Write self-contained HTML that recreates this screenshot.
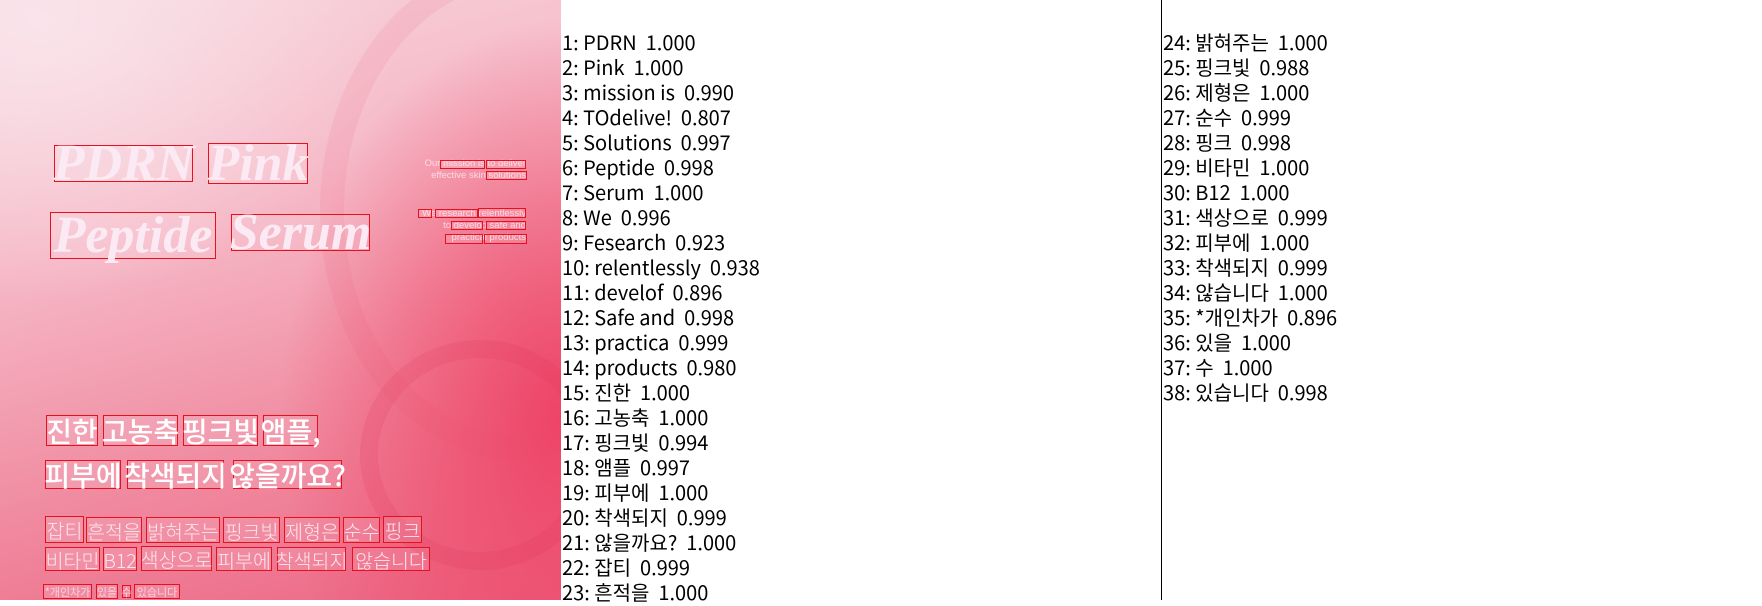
<!DOCTYPE html>
<html><head><meta charset="utf-8"><style>
*{margin:0;padding:0;box-sizing:border-box}
body{width:1762px;height:600px;overflow:hidden;background:#fff;position:relative;font-family:"Liberation Sans","Noto Sans CJK KR",sans-serif}
#img{position:absolute;left:0;top:0;width:561px;height:600px;overflow:hidden;
background:radial-gradient(ellipse 360px 280px at 40px 20px,rgba(250,228,235,.95),rgba(250,228,235,0) 100%),
radial-gradient(ellipse 280px 400px at 560px 420px,#ee4466,rgba(238,68,102,0) 100%),
linear-gradient(165deg,#f7d6de 0%,#f5b3c2 40%,#f08aa0 70%,#ec6482 100%)}
.sw{position:absolute;border-radius:50%;}
.b{position:absolute;border:1.5px solid #e8101c;background:rgba(255,255,255,.12);display:flex;align-items:center;justify-content:center;white-space:nowrap;overflow:visible}
.ti{font-family:"Liberation Serif",serif;font-style:italic;font-weight:bold;font-size:52px;color:#fbeaf3}
.h{font-family:"Noto Sans CJK KR",sans-serif;font-size:28px;color:#fff;font-weight:500}
.p{font-family:"Noto Sans CJK KR",sans-serif;font-size:19.5px;color:#fde6ec;font-weight:300}
.f{font-family:"Noto Sans CJK KR",sans-serif;font-size:11px;color:#fbd0dc;border-width:1px}
.t{position:absolute;white-space:nowrap}
.s{font-size:9.5px;color:rgba(255,235,240,.8);text-align:right;right:35px;line-height:12px}
.col{position:absolute;top:29px;font-family:"Noto Sans CJK KR",sans-serif;font-size:20px;line-height:25px;color:#000;white-space:pre}
</style></head><body>
<div id="img">
 <div class="sw" style="left:320px;top:-40px;width:400px;height:500px;border:24px solid rgba(235,80,110,.10)"></div>
 <div class="sw" style="left:360px;top:340px;width:240px;height:230px;border:18px solid rgba(220,50,85,.15)"></div>

 <div class="b ti" style="left:54px;top:145px;width:139px;height:37px">PDRN</div>
 <div class="b ti" style="left:208px;top:143px;width:100px;height:41px">Pink</div>
 <div class="b ti" style="left:50px;top:212px;width:166px;height:47px">Peptide</div>
 <div class="b ti" style="left:231px;top:214px;width:139px;height:37px">Serum</div>

 <div class="t s" style="top:158px">Our mission is to deliver<br>effective skin solutions</div>
 <div class="t s" style="top:208px">We research relentlessly<br>to develop safe and<br>practical products</div>
 <div class="b" style="left:440px;top:160px;width:45px;height:9px;border-width:1px"></div>
 <div class="b" style="left:486px;top:160px;width:40px;height:9px;border-width:1px"></div>
 <div class="b" style="left:486px;top:171px;width:41px;height:9px;border-width:1px"></div>
 <div class="b" style="left:418px;top:209px;width:14px;height:9px;border-width:1px"></div>
 <div class="b" style="left:435px;top:209px;width:43px;height:9px;border-width:1px"></div>
 <div class="b" style="left:478px;top:208px;width:48px;height:10px;border-width:1px"></div>
 <div class="b" style="left:451px;top:221px;width:32px;height:9px;border-width:1px"></div>
 <div class="b" style="left:486px;top:221px;width:40px;height:9px;border-width:1px"></div>
 <div class="b" style="left:445px;top:234px;width:38px;height:10px;border-width:1px"></div>
 <div class="b" style="left:484px;top:234px;width:43px;height:10px;border-width:1px"></div>

 <div class="b h" style="left:46px;top:415px;width:52px;height:31px">진한</div>
 <div class="b h" style="left:103px;top:415px;width:75px;height:31px">고농축</div>
 <div class="b h" style="left:183px;top:415px;width:75px;height:31px">핑크빛</div>
 <div class="b h" style="left:263px;top:415px;width:55px;height:31px">앰플,</div>
 <div class="b h" style="left:45px;top:460px;width:76px;height:29px">피부에</div>
 <div class="b h" style="left:127px;top:460px;width:97px;height:29px">착색되지</div>
 <div class="b h" style="left:233px;top:460px;width:109px;height:29px">않을까요?</div>

 <div class="b p" style="left:45px;top:516px;width:39px;height:27px">잡티</div>
 <div class="b p" style="left:86px;top:517px;width:56px;height:26px">흔적을</div>
 <div class="b p" style="left:146px;top:517px;width:74px;height:26px">밝혀주는</div>
 <div class="b p" style="left:223px;top:517px;width:57px;height:26px">핑크빛</div>
 <div class="b p" style="left:284px;top:517px;width:56px;height:26px">제형은</div>
 <div class="b p" style="left:343px;top:517px;width:37px;height:26px">순수</div>
 <div class="b p" style="left:383px;top:516px;width:39px;height:27px">핑크</div>
 <div class="b p" style="left:45px;top:547px;width:55px;height:24px">비타민</div>
 <div class="b p" style="left:103px;top:547px;width:34px;height:24px">B12</div>
 <div class="b p" style="left:141px;top:546px;width:71px;height:25px">색상으로</div>
 <div class="b p" style="left:216px;top:547px;width:56px;height:24px">피부에</div>
 <div class="b p" style="left:277px;top:547px;width:69px;height:24px">착색되지</div>
 <div class="b p" style="left:352px;top:547px;width:78px;height:24px">않습니다</div>

 <div class="b f" style="left:43px;top:584px;width:49px;height:15px">*개인차가</div>
 <div class="b f" style="left:96px;top:584px;width:22px;height:15px">있을</div>
 <div class="b f" style="left:122px;top:585px;width:9px;height:13px">수</div>
 <div class="b f" style="left:134px;top:584px;width:46px;height:15px">있습니다</div>
</div>

<div class="col" style="left:562px">1: PDRN  1.000
2: Pink  1.000
3: mission is  0.990
4: TOdelive!  0.807
5: Solutions  0.997
6: Peptide  0.998
7: Serum  1.000
8: We  0.996
9: Fesearch  0.923
10: relentlessly  0.938
11: develof  0.896
12: Safe and  0.998
13: practica  0.999
14: products  0.980
15: 진한  1.000
16: 고농축  1.000
17: 핑크빛  0.994
18: 앰플  0.997
19: 피부에  1.000
20: 착색되지  0.999
21: 않을까요?  1.000
22: 잡티  0.999
23: 흔적을  1.000</div>
<div style="position:absolute;left:1161px;top:0;width:1px;height:600px;background:#000"></div>
<div class="col" style="left:1163px">24: 밝혀주는  1.000
25: 핑크빛  0.988
26: 제형은  1.000
27: 순수  0.999
28: 핑크  0.998
29: 비타민  1.000
30: B12  1.000
31: 색상으로  0.999
32: 피부에  1.000
33: 착색되지  0.999
34: 않습니다  1.000
35: *개인차가  0.896
36: 있을  1.000
37: 수  1.000
38: 있습니다  0.998</div>
</body></html>
